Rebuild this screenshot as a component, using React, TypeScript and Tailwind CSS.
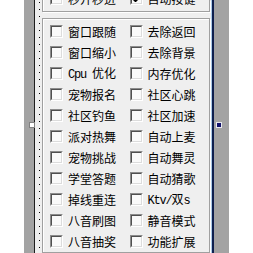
import React from 'react';

type Item = { label: React.ReactNode; checked?: boolean };

// latin text in the old half-width style
const Latin = ({ children }: { children: React.ReactNode }) => (
  <span className="font-['Liberation_Mono',monospace] text-[12px] tracking-[-1.2px]">{children}</span>
);

const rows: [Item, Item][] = [
  [{ label: '窗口跟随' }, { label: '去除返回' }],
  [{ label: '窗口缩小' }, { label: '去除背景' }],
  [{ label: <><Latin>Cpu </Latin>优化</> }, { label: '内存优化' }],
  [{ label: '宠物报名' }, { label: '社区心跳' }],
  [{ label: '社区钓鱼' }, { label: '社区加速' }],
  [{ label: '派对热舞' }, { label: '自动上麦' }],
  [{ label: '宠物挑战' }, { label: '自动舞灵' }],
  [{ label: '学堂答题' }, { label: '自动猜歌' }],
  [{ label: '掉线重连' }, { label: <><Latin>Ktv/</Latin>双<Latin>s</Latin></> }],
  [{ label: '八音刷图' }, { label: '静音模式' }],
  [{ label: '八音抽奖' }, { label: '功能扩展' }],
];

const CheckBox = ({ checked }: { checked?: boolean }) => (
  <div className="w-[13px] h-[13px] shrink-0 border border-t-[#8c8c8c] border-l-[#8c8c8c] border-b-white border-r-white">
    <div className="w-full h-full border border-t-[#505050] border-l-[#505050] border-b-[#dcdcdc] border-r-[#dcdcdc] bg-[#fafafa] relative">
      {checked && (
        <svg className="absolute left-0 top-0" width="9" height="9" viewBox="0 0 9 9">
          <path d="M1 3v3l2 2h1l4-4V1L3.5 5.5z" fill="#000" />
        </svg>
      )}
    </div>
  </div>
);

const Row = ({ left, right }: { left: Item; right: Item }) => (
  <div className="flex h-[21px] items-center">
    {[left, right].map((it, i) => (
      <div key={i} className="w-[80px] flex items-center">
        <CheckBox checked={it.checked} />
        <span className="ml-[5px] text-[12px] leading-none text-black whitespace-nowrap">{it.label}</span>
      </div>
    ))}
  </div>
);

export default function App() {
  return (
    <div className="relative w-[253px] h-[253px] overflow-hidden flex bg-white font-['Noto_Sans_CJK_SC','Noto_Sans',sans-serif]">
      <div className="w-[24px] shrink-0 bg-white" />
      <div className="w-[10px] shrink-0 bg-[#a3a3a3]" />
      <div className="w-[1px] shrink-0 bg-[#1e1e1e]" />

      {/* form client area */}
      <div className="w-[176px] shrink-0 bg-[#efefef] flex pl-[4px]">
        <div className="w-[1px] flex flex-col pt-[2px] gap-[6px]">
          {Array.from({ length: 36 }).map((_, i) => (
            <div key={i} className="w-[1px] h-[1px] bg-black" />
          ))}
        </div>

        <div className="ml-[2px] w-[168px] flex flex-col">
          <div className="h-[13px] overflow-hidden border-x border-b border-[#a0a0a0] shadow-[inset_1px_0_0_#fff,1px_1px_0_#fff] pl-[7px]">
            <div className="-mt-[12px]">
              <Row left={{ label: '秒开秒进' }} right={{ label: '自动按键', checked: true }} />
            </div>
          </div>

          <div className="mt-[6px] flex-1 border border-[#a0a0a0] shadow-[inset_1px_1px_0_#fff,1px_1px_0_#fff] pl-[7px] pt-[2px]">
            {rows.map((r, i) => (
              <Row key={i} left={r[0]} right={r[1]} />
            ))}
          </div>
        </div>
      </div>

      <div className="w-[1px] shrink-0 bg-[#a8c8e8]" />
      <div className="w-[2px] shrink-0 bg-[#0e1f4e]" />
      <div className="w-[15px] shrink-0 bg-[#a3a3a3]" />
      <div className="w-[24px] shrink-0 bg-white" />

      {/* selection handles */}
      <div className="absolute left-[29px] top-[122px] w-[6px] h-[6px] bg-white border border-[#808080]" />
      <div className="absolute left-[216px] top-[122px] w-[6px] h-[6px] bg-[#10106a] border border-[#e8e8f0]" />
    </div>
  );
}
